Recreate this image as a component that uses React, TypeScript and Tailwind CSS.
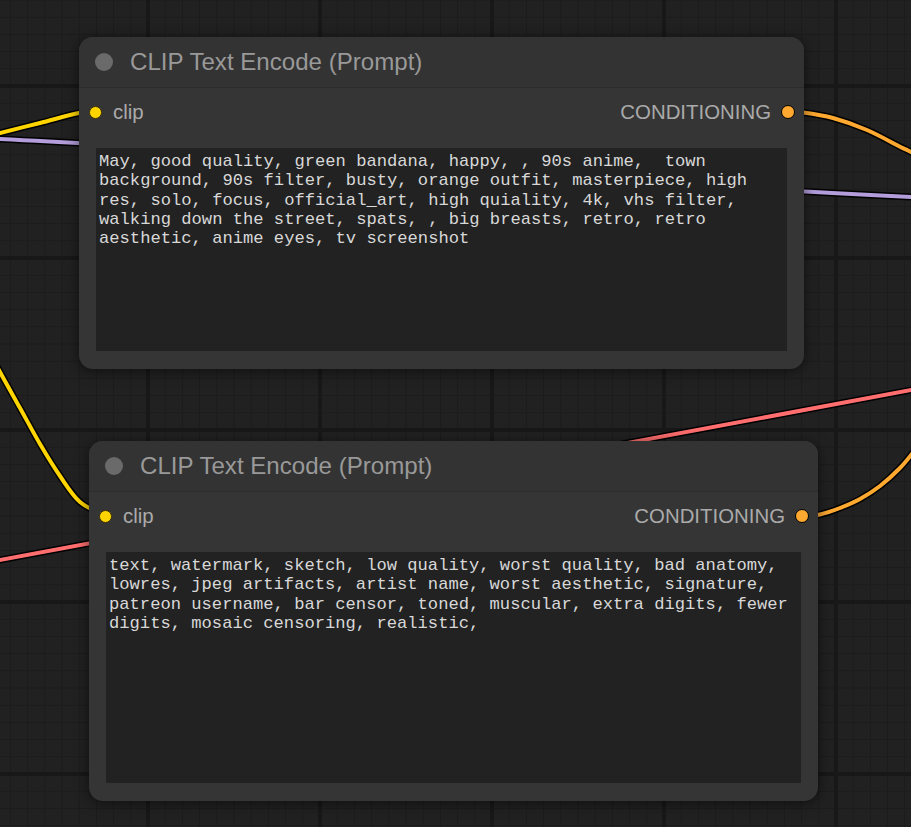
import React from "react";

type Pt = [number, number];

// catmull-rom through the points -> cubic path
const smooth = (pts: Pt[]): string => {
  let d = `M ${pts[0][0]} ${pts[0][1]}`;
  for (let i = 0; i < pts.length - 1; i++) {
    const p0 = pts[i - 1] || pts[i];
    const p1 = pts[i];
    const p2 = pts[i + 1];
    const p3 = pts[i + 2] || p2;
    const c1x = p1[0] + (p2[0] - p0[0]) / 6;
    const c1y = p1[1] + (p2[1] - p0[1]) / 6;
    const c2x = p2[0] - (p3[0] - p1[0]) / 6;
    const c2y = p2[1] - (p3[1] - p1[1]) / 6;
    d += ` C ${c1x} ${c1y}, ${c2x} ${c2y}, ${p2[0]} ${p2[1]}`;
  }
  return d;
};

const wires: { d: string; color: string }[] = [
  { d: "M -10 138.5 C 250 150, 600 183, 930 198", color: "#b39ddb" },
  { d: "M -10 561.9 L 930 386.5", color: "#ff6e6e" },
  {
    d: smooth([[-20, 138], [0, 133], [40, 123], [79, 113], [96, 112]]),
    color: "#ffd500",
  },
  {
    d: smooth([[788, 112], [803, 112.5], [833, 118], [867, 130], [900, 146.7], [911, 152], [930, 163]]),
    color: "#ffa931",
  },
  {
    d: smooth([[-10, 352], [0, 372], [20, 408], [40, 444], [60, 476], [80, 502], [106, 516]]),
    color: "#ffd500",
  },
  {
    d: smooth([[802, 516], [820, 514.5], [840, 508], [860, 499], [880, 486], [900, 468], [915, 450], [930, 430]]),
    color: "#ffa931",
  },
];

const prompts = {
  positive:
    "May, good quality, green bandana, happy, , 90s anime,  town background, 90s filter, busty, orange outfit, masterpiece, high res, solo, focus, official_art, high quiality, 4k, vhs filter, walking down the street, spats, , big breasts, retro, retro aesthetic, anime eyes, tv screenshot",
  negative:
    "text, watermark, sketch, low quality, worst quality, bad anatomy, lowres, jpeg artifacts, artist name, worst aesthetic, signature, patreon username, bar censor, toned, muscular, extra digits, fewer digits, mosaic censoring, realistic,",
};

const CELL = 17.2;

const Canvas: React.FC = () => (
  <svg className="absolute inset-0" width={911} height={827}>
    <defs>
      <pattern id="grid" x={146} y={84} width={CELL * 10} height={CELL * 10} patternUnits="userSpaceOnUse">
        <rect width={CELL * 10} height={CELL * 10} fill="#212121" />
        {Array.from({ length: 10 }).map((_, i) => (
          <React.Fragment key={i}>
            <rect x={1.5 + i * CELL} y={0} width={1} height={CELL * 10} fill="#1b1b1b" />
            <rect x={0} y={1.5 + i * CELL} width={CELL * 10} height={1} fill="#1b1b1b" />
          </React.Fragment>
        ))}
        <rect x={0} y={0} width={4} height={CELL * 10} fill="#181818" />
        <rect x={0} y={0} width={CELL * 10} height={4} fill="#181818" />
      </pattern>
    </defs>
    <rect width={911} height={827} fill="url(#grid)" />
    {wires.map((w, i) => (
      <g key={i} fill="none" strokeLinecap="round">
        <path d={w.d} stroke="#000" strokeWidth={7} />
        <path d={w.d} stroke={w.color} strokeWidth={4} />
      </g>
    ))}
  </svg>
);

type NodeProps = {
  left: number;
  top: number;
  width: number;
  height: number;
  text: string;
};

const ClipNode: React.FC<NodeProps> = ({ left, top, width, height, text }) => (
  <div
    className="absolute flex flex-col rounded-[14px] bg-[#353535] shadow-[0_2px_14px_rgba(0,0,0,0.55)] font-['Liberation_Sans',Arial,sans-serif]"
    style={{ left, top, width, height }}
  >
    <div className="flex h-[51px] flex-none items-center rounded-t-[14px] border-b border-[#2c2c2c] bg-[#333]">
      <span className="ml-[16px] h-[18px] w-[18px] rounded-full bg-[#6a6a6a]" />
      <span className="ml-[17px] text-[24.1px] leading-none text-[#999]">
        CLIP Text Encode (Prompt)
      </span>
    </div>
    <div className="flex h-[48px] flex-none items-center justify-between">
      <div className="flex items-center">
        <span className="ml-[10px] h-[13px] w-[13px] rounded-full border border-[#3a3000] bg-[#ffd500]" />
        <span className="ml-[11px] text-[20.4px] leading-none text-[#aaa]">clip</span>
      </div>
      <div className="flex items-center">
        <span className="text-[20.4px] leading-none text-[#aaa]">CONDITIONING</span>
        <span className="ml-[10px] mr-[9px] h-[14px] w-[14px] rounded-full border-[1.5px] border-black bg-[#ffa931]" />
      </div>
    </div>
    <div className="flex-1 px-[17px] pb-[18px] pt-[12px]">
      <textarea
        readOnly
        spellCheck={false}
        value={text}
        className="block h-full w-full resize-none overflow-hidden bg-[#222] px-[3px] pt-[4px] font-['Liberation_Mono','Courier_New',monospace] text-[17.15px] leading-[19.25px] text-[#d8d8d8] outline-none"
      />
    </div>
  </div>
);

const App: React.FC = () => {
  return (
    <div className="relative h-[827px] w-[911px] overflow-hidden bg-[#212121]">
      <Canvas />
      <ClipNode left={79} top={37} width={725} height={332} text={prompts.positive} />
      <ClipNode left={89} top={441} width={729} height={360} text={prompts.negative} />
    </div>
  );
};

export default App;
